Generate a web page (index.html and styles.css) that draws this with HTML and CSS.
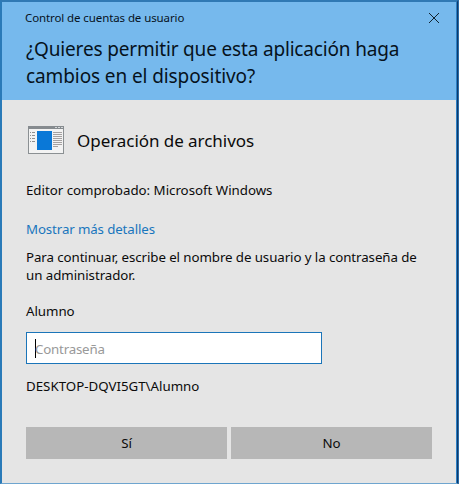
FILE: index.html
```html
<!DOCTYPE html>
<html lang="es">
<head>
<meta charset="utf-8">
<title>Control de cuentas de usuario</title>
<link rel="stylesheet" href="styles.css">
</head>
<body>
<main class="dialog">
  <header class="header">
    <div class="titlebar">
      <span class="caption">Control de cuentas de usuario</span>
      <svg class="close" width="10" height="10" viewBox="0 0 10 10" role="img" aria-label="Cerrar"><path d="M0 0L10 10M10 0L0 10" fill="none" stroke="#10222f" stroke-width="1"/></svg>
    </div>
    <h1 class="question"><span class="question-first">¿Quieres permitir que esta aplicación haga</span><br>cambios en el dispositivo?</h1>
  </header>
  <section class="content">
    <div class="app">
      <svg class="app-icon" width="36" height="28" viewBox="0 0 36 28" aria-hidden="true">
        <rect x=".5" y=".5" width="35" height="27" fill="#f3f3f3" stroke="#8b9093"/>
        <path d="M0 0h36v3H0z" fill="#868b8f"/>
        <path d="M27 1h2v1h-2zM30 1h2v1h-2zM33 1h2v1h-2z" fill="#d5d8da"/>
        <path d="M9 5h15v19H9z" fill="#0a78d7"/>
        <path d="M2 6.5h1M4 6.5h3M2 9.5h1M4 9.5h3M2 12.5h1M4 12.5h3M2 15.5h1M4 15.5h3" stroke="#909090"/>
        <path d="M25 6.5h9M25 8.5h9M25 10.5h9M25 12.5h9M25 14.5h9M25 16.5h9M25 18.5h9M25 20.5h5" stroke="#a5a1a1"/>
      </svg>
      <h2 class="app-name">Operación de archivos</h2>
    </div>
    <p class="publisher">Editor comprobado: Microsoft Windows</p>
    <a class="details">Mostrar más detalles</a>
    <p class="prompt"><span class="prompt-first">Para continuar, escribe el nombre de usuario y la contraseña de</span><br>un administrador.</p>
    <p class="user">Alumno</p>
    <div class="password"><span class="caret"></span><span class="placeholder">Contraseña</span></div>
    <p class="domain">DESKTOP-DQVI5GT\Alumno</p>
    <div class="actions">
      <button class="button" type="button">Sí</button>
      <button class="button" type="button">No</button>
    </div>
  </section>
</main>
</body>
</html>
```
FILE: styles.css
```css
* {
  box-sizing: border-box;
}

body {
  margin: 0;
  background: #2a6ba5;
  color: #0b0b0b;
  font: 13.3px/18px "Noto Sans", "Open Sans", sans-serif;
  white-space: nowrap;
}

h1, h2, p {
  margin: 0;
  font-weight: 400;
}

.dialog {
  height: 484px;
  margin-right: 1px;
  border: solid;
  border-width: 2px 1px 1px 2px;
  border-color: #3079b4 #0d3a6c #6ea5cf #2a7ab8;
  background: #e5e5e5;
  box-shadow: inset -1px 0 #2b7fc4;
  overflow: hidden;
}

.header {
  height: 98px;
  padding: 8px 18px 0 23px;
  background: #76b9ed;
  box-shadow: inset -1px 0 #2b7fc4;
  color: #06121c;
}

.titlebar {
  display: flex;
  justify-content: space-between;
  align-items: center;
  height: 16px;
}

.caption {
  font-size: 11.5px;
  line-height: 16px;
  letter-spacing: -0.1px;
}

.question {
  margin: 10px 0 0 1px;
  font-size: 19px;
  line-height: 27px;
  letter-spacing: -0.1px;
}

.question-first {
  letter-spacing: -0.17px;
}

.content {
  display: flex;
  flex-direction: column;
  align-items: flex-start;
  padding: 26px 24px 0;
}

.app {
  display: flex;
  align-items: center;
  gap: 13px;
  height: 28px;
  padding-left: 2px;
}

.app-name {
  padding-top: 2px;
  font-size: 17px;
  line-height: 24px;
  letter-spacing: -0.05px;
}

.publisher {
  margin-top: 27px;
  letter-spacing: -0.02px;
}

.details {
  margin-top: 21px;
  color: #1976bd;
  letter-spacing: -0.12px;
}

.prompt {
  margin-top: 10px;
  letter-spacing: -0.05px;
}

.prompt-first {
  letter-spacing: -0.08px;
}

.user {
  margin-top: 18px;
  letter-spacing: -0.05px;
}

.password {
  display: flex;
  align-items: center;
  width: 296px;
  height: 32px;
  margin-top: 12px;
  padding: 0 8px;
  border: 1px solid #1b75b9;
  background: #fff;
}

.caret {
  width: 1px;
  height: 19px;
  background: #000;
}

.placeholder {
  padding-top: 2px;
  margin-left: -1px;
  color: #999;
  letter-spacing: -0.2px;
}

.domain {
  margin-top: 13px;
  letter-spacing: 0;
}

.actions {
  display: flex;
  gap: 4px;
  margin-top: 32px;
}

.button {
  width: 201px;
  height: 32px;
  padding: 0;
  border: 0;
  background: #b7b7b7;
  color: inherit;
  font: inherit;
}
```
